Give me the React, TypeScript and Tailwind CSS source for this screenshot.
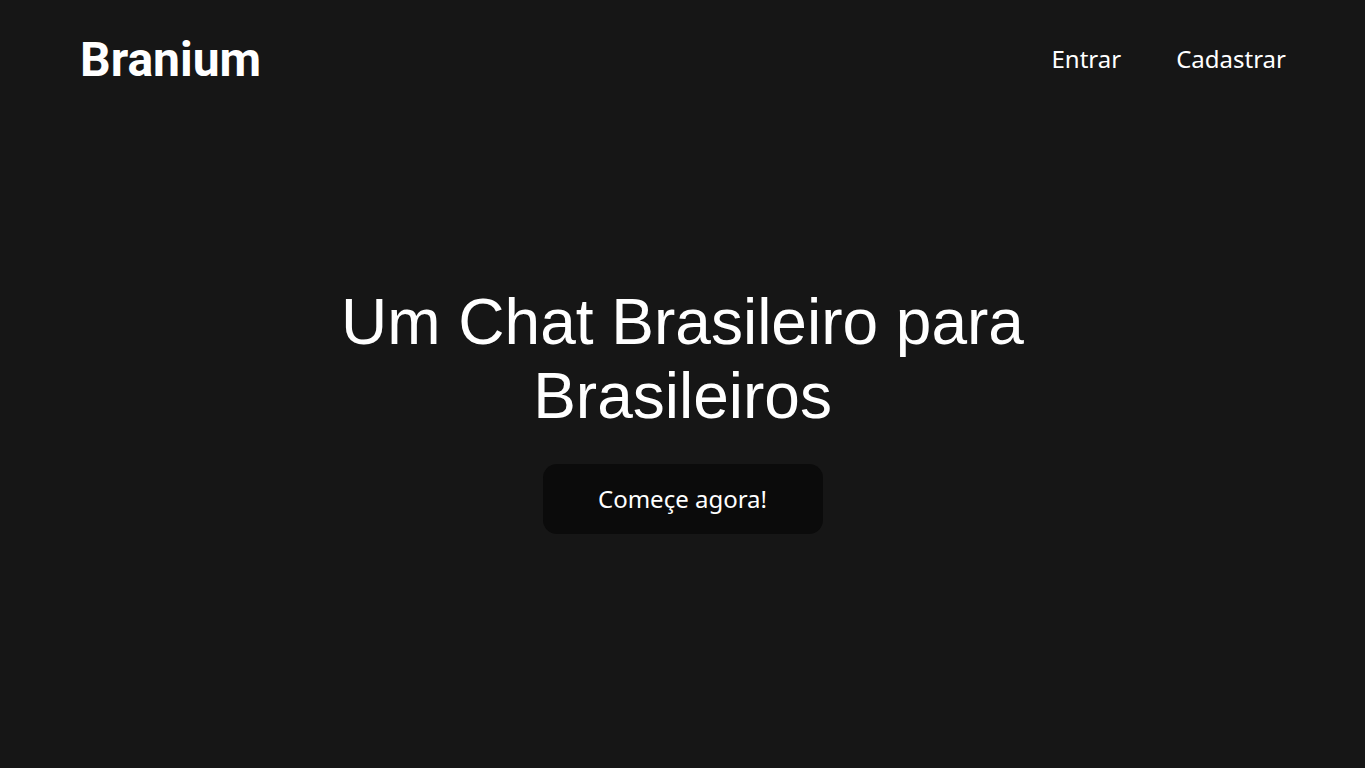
import React from "react";

export default function App() {
  return (
    <div className="min-h-screen w-full bg-[#161616] text-white flex flex-col">
      <header className="flex items-center justify-between pl-20 pr-[79px] h-[120px]">
        <div className="text-[48px] font-bold font-['Roboto',sans-serif] leading-none">Branium</div>
        <nav className="flex items-center gap-[55px] font-['Noto_Sans',sans-serif] text-[24px] leading-none -mt-[2px]">
          <a href="#" className="text-white">Entrar</a>
          <a href="#" className="text-white">Cadastrar</a>
        </nav>
      </header>
      <main className="flex flex-col items-center pt-[166px]">
        <h1 className="font-['Liberation_Sans',Arial,sans-serif] text-[64px] leading-[1.15] text-center max-w-[720px] font-normal">
          Um Chat Brasileiro para Brasileiros
        </h1>
        <button className="mt-[31px] w-[280px] h-[70px] rounded-[14px] bg-[#0b0b0b] font-['Noto_Sans',sans-serif] text-[24px] text-white">
          Começe agora!
        </button>
      </main>
    </div>
  );
}
